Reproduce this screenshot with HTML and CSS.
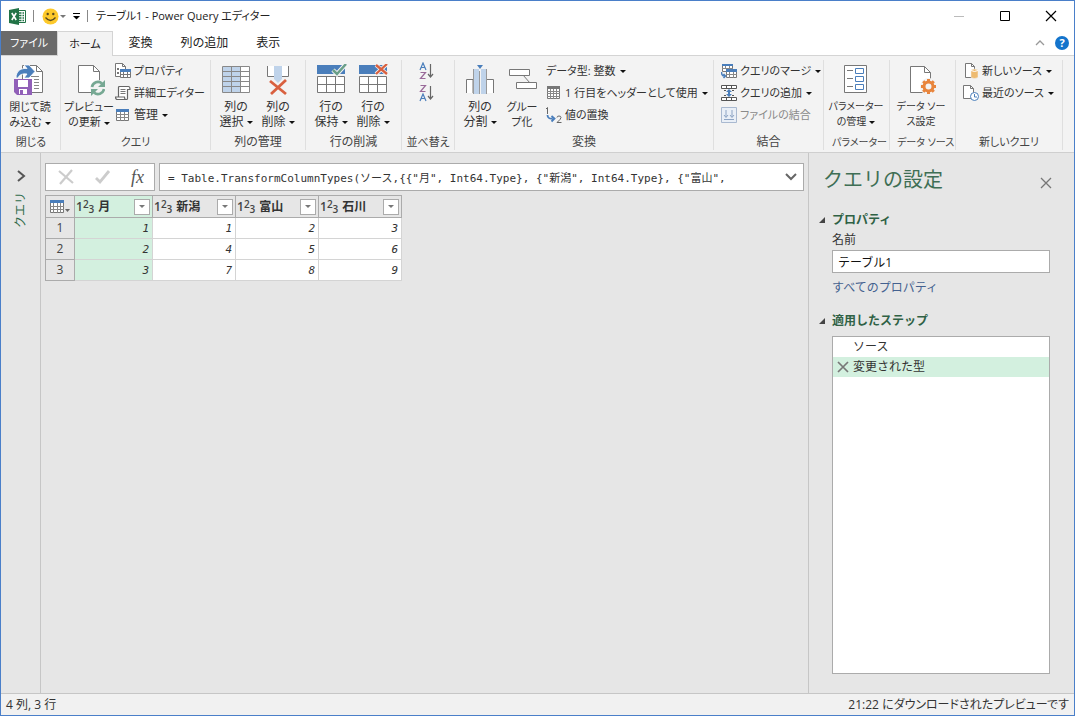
FILE: index.html
```html
<!DOCTYPE html>
<html lang="ja">
<head>
<meta charset="utf-8">
<title>テーブル1 - Power Query エディター</title>
<link rel="stylesheet" href="styles.css">
</head>
<body>
<div class="window">
  <header class="titlebar">
    <svg class="app-icon" width="17" height="17" viewBox="0 0 17 17"><path d="M8.500 2.500h8v12h-8z" fill="#fff" stroke="#217346"/><path d="M10 5h2.500M13.500 5H15M10 7.500h2.500M13.500 7.500H15M10 10h2.500M13.500 10H15M10 12.500h2.500M13.500 12.500H15" stroke="#217346" stroke-width="1.300"/><path d="M0 2l10-2v17L0 15z" fill="#217346"/><path d="M2.800 5l4.400 7M7.200 5l-4.400 7" stroke="#fff" stroke-width="1.600"/></svg>
    <span class="bar"></span>
    <button class="quick" aria-label="フィードバック"><svg width="17" height="17" viewBox="0 0 17 17"><circle cx="8.500" cy="8.500" r="8" fill="#fdc92b"/><circle cx="5.700" cy="6" r="1.200" fill="#5a4a20"/><circle cx="11.300" cy="6" r="1.200" fill="#5a4a20"/><path d="M3.500 9.500q5 6 10 0" fill="none" stroke="#5a4a20" stroke-width="1.300"/></svg><span class="caret caret-gray"></span></button>
    <button class="quick customize" aria-label="クイック アクセスのカスタマイズ"><svg width="7" height="7" viewBox="0 0 7 7"><path d="M0 .5h7" stroke="#000"/><path d="M0 3h7L3.500 6.500z"/></svg></button>
    <span class="bar"></span>
    <h1 class="title">テーブル1 - Power Query エディター</h1>
    <div class="controls">
      <button aria-label="最小化"><svg width="12" height="12"><path d="M1 6.500h10" stroke="#bbb"/></svg></button>
      <button aria-label="最大化"><svg width="12" height="12"><path d="M1.500 1.500h9v9h-9z" fill="none" stroke="#000"/></svg></button>
      <button aria-label="閉じる"><svg width="12" height="12"><path d="M1 1l10 10M11 1L1 11" stroke="#000" stroke-width="1.200"/></svg></button>
    </div>
  </header>

  <nav class="tabs">
    <button class="tab file">ファイル</button>
    <button class="tab active">ホーム</button>
    <button class="tab">変換</button>
    <button class="tab">列の追加</button>
    <button class="tab">表示</button>
    <div class="tab-tools">
      <button aria-label="リボンを折りたたむ"><svg width="10" height="6"><path d="M1 5l4-4 4 4" fill="none" stroke="#999" stroke-width="1.300"/></svg></button>
      <button class="help" aria-label="ヘルプ">?</button>
    </div>
  </nav>

  <section class="ribbon" aria-label="ホーム">
    <div class="group g-close">
      <div class="tools">
        <button class="big wide snug"><svg width="32" height="32" viewBox="0 0 32 32"><path d="M8.500 1.500h14l6 6v21h-20z" fill="#fff" stroke="#777"/><path d="M22.500 1.500v6h6" fill="none" stroke="#777"/><path d="M17 12.500h8M20 15.500h5M20 18.500h5M20 21.500h5M20 24.500h5" stroke="#888"/><path d="M2 14C2 6 8 4 13 4.500L10 1h5l6 6.500-6 6.500h-5l3-4Q6 9 4 14z" fill="#4a7ebb" stroke="#fff" stroke-width=".8"/><path d="M0 15h18v16H3l-3-3z" fill="#9160b8"/><path d="M4 16h10v7H4zM5 25h8v5H5z" fill="#fff"/><path d="M6 26h3v4H6z" fill="#9160b8"/></svg><span>閉じて読<br>み込む<i class="caret"></i></span></button>
      </div>
      <p class="caption snug">閉じる</p>
    </div>
    <div class="group g-query">
      <div class="tools">
        <button class="big wide snug"><svg width="32" height="32" viewBox="0 0 32 32"><path d="M5.500 1.500h15l6 6v21h-21z" fill="#fff" stroke="#777"/><path d="M20.500 1.500v6h6" fill="none" stroke="#777"/><circle cx="25" cy="24" r="8" fill="#f3f3f3"/><path d="M19 23a6 6 0 0 1 10-3.500M31 25a6 6 0 0 1-10 3.500" fill="none" stroke="#76a893" stroke-width="2.600"/><path d="M32 16v7h-7zM18 32v-7h7z" fill="#76a893"/></svg><span>プレビュー<br>の更新<i class="caret"></i></span></button>
        <div class="stack">
          <button class="small snug"><svg width="16" height="16" viewBox="0 0 16 16"><path d="M.5.5h7l3 3v10H.5z" fill="#fff" stroke="#777"/><path d="M7.500.5v3h3" fill="none" stroke="#777"/><path d="M2 5h2v2H2zM2 9h2v2H2z" fill="#777"/><path d="M5.500 6.500h10v8h-10z" fill="#fff" stroke="#777"/><path d="M5 6h11v3H5z" fill="#4a7ebb"/><path d="M5.500 11.500h10M8.500 9v6M12.500 9v6" stroke="#777"/></svg>プロパティ</button>
          <button class="small snug"><svg width="16" height="16" viewBox="0 0 16 16"><path d="M3.500 12V2.500q0-1 1-1h9q1.500 0 1.500 3h-2.500v9q0 1-1 1h-9Q.5 14.500.5 12h9q0 2.500 1.500 2.500" fill="#fff" stroke="#666" stroke-width="1.200"/><path d="M5.500 4.500h5M5.500 6.500h5M5.500 8.500h5" stroke="#777"/></svg>詳細エディター</button>
          <button class="small"><svg width="16" height="16" viewBox="0 0 16 16"><path d="M1.500 2.500h12v11h-12z" fill="#fff" stroke="#777"/><path d="M1 2h13v3H1z" fill="#4a7ebb"/><path d="M1 7.500h13M1 10.500h13M5.500 5v9M9.500 5v9" stroke="#888"/></svg>管理<i class="caret"></i></button>
        </div>
      </div>
      <p class="caption snug">クエリ</p>
    </div>
    <div class="group g-cols">
      <div class="tools">
        <button class="big"><svg width="32" height="32" viewBox="0 0 32 32"><path d="M2.500 2.500h27v26h-27z" fill="#fff"/><path d="M3 3h18v25H3z" fill="#bfd3ea"/><path d="M2.500 2.500h27v26h-27zM2.500 7.500h27M2.500 12.500h27M2.500 17.500h27M2.500 22.500h27M11.500 2.500v26M20.500 2.500v26" fill="none" stroke="#888"/></svg><span>列の<br>選択<i class="caret"></i></span></button>
        <button class="big"><svg width="32" height="32" viewBox="0 0 32 32"><path d="M5 2h7v10H5zM20 2h7v10h-7z" fill="#fff"/><path d="M5.500 2v10.500H12M26.500 2v10.500H20" fill="none" stroke="#777"/><path d="M12 2h8v13l-4 4-4-4z" fill="#bfd3ea"/><path d="M8 17l16 13M24 16L9 30" stroke="#d9603f" stroke-width="2.800"/></svg><span>列の<br>削除<i class="caret"></i></span></button>
      </div>
      <p class="caption">列の管理</p>
    </div>
    <div class="group g-rows">
      <div class="tools">
        <button class="big"><svg width="32" height="32" viewBox="0 0 32 32"><path d="M2 1h28v9H2z" fill="#4a7ebb"/><path d="M2.500 12.500h27v16h-27zM2.500 20.500h27M11.500 12.500v16M20.500 12.500v16" fill="#fff" stroke="#777"/><path d="M18 6l4 4 9-10" fill="none" stroke="#f3f3f3" stroke-width="4.500"/><path d="M18 6l4 4 9-10" fill="none" stroke="#6a9f89" stroke-width="2.500"/></svg><span>行の<br>保持<i class="caret"></i></span></button>
        <button class="big"><svg width="32" height="32" viewBox="0 0 32 32"><path d="M2 1h28v9H2z" fill="#4a7ebb"/><path d="M2.500 12.500h27v16h-27zM2.500 20.500h27M11.500 12.500v16M20.500 12.500v16" fill="#fff" stroke="#777"/><path d="M19 1l11 9M30 0L19 10" stroke="#f3f3f3" stroke-width="4"/><path d="M19 1l11 9M30 0L19 10" stroke="#d9603f" stroke-width="2.300"/></svg><span>行の<br>削除<i class="caret"></i></span></button>
      </div>
      <p class="caption">行の削減</p>
    </div>
    <div class="group g-sort">
      <div class="tools">
        <div class="stack">
          <button class="small" aria-label="昇順で並べ替え"><svg width="16" height="18" viewBox="0 0 16 18"><path d="M1 8l3-7 3 7M2 5.500h4" fill="none" stroke="#4a7ebb" stroke-width="1.200"/><path d="M1.500 10.500h5l-5 6h5" fill="none" stroke="#9a6a9a" stroke-width="1.200"/><path d="M11.500 2v13M9 12l2.500 3 2.500-3" fill="none" stroke="#666" stroke-width="1.200"/></svg></button>
          <button class="small" aria-label="降順で並べ替え"><svg width="16" height="18" viewBox="0 0 16 18"><path d="M1.500 1.500h5l-5 6h5" fill="none" stroke="#9a6a9a" stroke-width="1.200"/><path d="M1 17l3-7 3 7M2 14.500h4" fill="none" stroke="#4a7ebb" stroke-width="1.200"/><path d="M11.500 2v13M9 12l2.500 3 2.500-3" fill="none" stroke="#666" stroke-width="1.200"/></svg></button>
        </div>
      </div>
      <p class="caption snug">並べ替え</p>
    </div>
    <div class="group g-transform">
      <div class="tools">
        <button class="big"><svg width="32" height="32" viewBox="0 0 32 32"><path d="M2.500 29V15.500H9V29M22 29V15.500h7.500V29" fill="#fff" stroke="#777"/><path d="M10 5h5v25h-5zM17 5h5v25h-5z" fill="#bfd3ea"/><path d="M9.500 30V5M15.500 7v23M22.500 5v25" stroke="#999"/><path d="M13 1h6l-3 4z" fill="#4a7ebb"/></svg><span>列の<br>分割<i class="caret"></i></span></button>
        <button class="big snug"><svg width="32" height="32" viewBox="0 0 32 32"><path d="M17 11l7 8" stroke="#777"/><path d="M3.500 5.500h20v6h-20zM10.500 18.500h20v6h-20z" fill="#fff" stroke="#777"/></svg><span>グルー<br>プ化</span></button>
        <div class="stack">
          <button class="small snug">データ型: 整数<i class="caret"></i></button>
          <button class="small snug"><svg width="16" height="16" viewBox="0 0 16 16"><path d="M1.500 1.500h12v12h-12z" fill="#fff" stroke="#777"/><path d="M1 1h13v3H1z" fill="#777"/><path d="M1 6.500h13M1 8.500h13M1 11.500h13M4.500 4v10M7.500 4v10M10.500 4v10" stroke="#888"/></svg>1 行目をヘッダーとして使用<i class="caret"></i></button>
          <button class="small snug"><svg width="16" height="16" viewBox="0 0 16 16"><path d="M0 2l1.500-1.500V7" fill="none" stroke="#666"/><path d="M1.500 8q0 4 5 3.500M5.500 9l3 2.500-3 3" fill="none" stroke="#4a7ebb" stroke-width="1.800"/><path d="M11 10.500q0-1.500 2-1.500 2 0 2 1.500t-4 5h4.500" fill="none" stroke="#666"/></svg>値の置換</button>
        </div>
      </div>
      <p class="caption">変換</p>
    </div>
    <div class="group g-combine">
      <div class="tools">
        <div class="stack">
          <button class="small snug"><svg width="16" height="16" viewBox="0 0 16 16"><path d="M1.500 1.500h10v7h-10zM5.500 7.500h10v7h-10z" fill="#fff" stroke="#777"/><path d="M1 1h11v2H1zM5 6h11v3H5z" fill="#4a7ebb"/><path d="M1 5.500h11M4.500 3v3M8.500 3v3M5 11.500h11M8.500 9v6M12.500 9v6" stroke="#888"/><path d="M.5 9q0 4 3 4M2.500 11l2 2-2 2" fill="none" stroke="#4a7ebb" stroke-width="1.500"/></svg>クエリのマージ<i class="caret"></i></button>
          <button class="small snug"><svg width="16" height="16" viewBox="0 0 16 16"><path d="M.5.500h15v3H.5zM.5 12.500h15v3H.5z" fill="#fff" stroke="#555"/><path d="M5.500.5v3M10.500.5v3M5.500 12.500v3M10.500 12.500v3M3 5.500h2M11 5.500h2M3 10.500h2M11 10.500h2" stroke="#555"/><path d="M8 4l3 3H9v2h2l-3 3-3-3h2V7H5z" fill="#4a7ebb"/></svg>クエリの追加<i class="caret"></i></button>
          <button class="small snug" disabled><svg width="16" height="16" viewBox="0 0 16 16"><path d="M.5.500h15v15H.5z" fill="#e9eff7" stroke="#a9b9d0"/><path d="M5 3v7M3 8l2 2.500L7 8M11 3v7M9 8l2 2.500L13 8M3 12.500h10" fill="none" stroke="#8da4c4"/></svg>ファイルの結合</button>
        </div>
      </div>
      <p class="caption">結合</p>
    </div>
    <div class="group g-params">
      <div class="tools">
        <button class="big wide tight"><svg width="32" height="32" viewBox="0 0 32 32"><path d="M4.500 1.500h22v27h-22z" fill="#fff" stroke="#777"/><path d="M7 6.500h6M7 14.500h6M7 22.500h6" stroke="#777"/><path d="M15.500 4.500h8v5h-8zM15.500 12.500h8v5h-8zM15.500 20.500h8v5h-8z" fill="#fff" stroke="#4a7ebb"/></svg><span>パラメーター<br>の管理<i class="caret"></i></span></button>
      </div>
      <p class="caption tight">パラメーター</p>
    </div>
    <div class="group g-source">
      <div class="tools">
        <button class="big wide tight"><svg width="32" height="32" viewBox="0 0 32 32"><path d="M5.500 2.500h14l6 6v20h-20z" fill="#fff" stroke="#777"/><path d="M19.500 2.500v6h6" fill="none" stroke="#777"/><circle cx="23.500" cy="22.500" r="8.500" fill="#f3f3f3"/><circle cx="23.500" cy="22.500" r="4.500" fill="#f3f3f3" stroke="#e8853d" stroke-width="3"/><path d="M23.500 15v3M23.500 27v3M16 22.500h3M28 22.500h3M18.200 17.200l2 2M26.800 25.800l2 2M18.200 27.800l2-2M26.800 19.200l2-2" stroke="#e8853d" stroke-width="3"/></svg><span>データ ソー<br>ス設定</span></button>
      </div>
      <p class="caption tight">データ ソース</p>
    </div>
    <div class="group g-new">
      <div class="tools">
        <div class="stack">
          <button class="small snug"><svg width="16" height="16" viewBox="0 0 16 16"><path d="M2.500.5h6l3 3v11h-9z" fill="#fff" stroke="#777"/><path d="M8.500.5v3h3" fill="none" stroke="#777"/><path d="M8 7q3.500-2 7 0v7.500q-3.500 2-7 0z" fill="#eebb70" stroke="#f3f3f3" stroke-width=".5"/><path d="M8 7.500q3.500 2 7 0" fill="none" stroke="#fff"/></svg>新しいソース<i class="caret"></i></button>
          <button class="small snug"><svg width="16" height="16" viewBox="0 0 16 16"><path d="M.5.500h7l3 3v10H.5z" fill="#fff" stroke="#777"/><path d="M7.500.5v3h3" fill="none" stroke="#777"/><circle cx="11.500" cy="11.500" r="4" fill="#fff" stroke="#4a7ebb"/><path d="M11.500 9v3H14" fill="none" stroke="#4a7ebb"/></svg>最近のソース<i class="caret"></i></button>
        </div>
      </div>
      <p class="caption snug">新しいクエリ</p>
    </div>
  </section>

  <div class="body">
    <aside class="queries">
      <button aria-label="クエリを展開"><svg width="10" height="12"><path d="M2 1l6 5-6 5" fill="none" stroke="#555" stroke-width="2"/></svg></button>
      <span class="queries-label">クエリ</span>
    </aside>

    <main class="work">
      <div class="formula">
        <div class="formula-actions">
          <button aria-label="キャンセル" disabled><svg width="16" height="16"><path d="M1 2l14 12M14 1L2 15" stroke="#ccc" stroke-width="2.200"/></svg></button>
          <button aria-label="適用" disabled><svg width="16" height="16"><path d="M1 9l4 4L14 2" fill="none" stroke="#ccc" stroke-width="2.800"/></svg></button>
          <button class="fx" aria-label="ステップの追加">fx</button>
        </div>
        <div class="formula-box">
          <input type="text" aria-label="数式" value='= Table.TransformColumnTypes(ソース,{{"月", Int64.Type}, {"新潟", Int64.Type}, {"富山",'>
          <button aria-label="数式バーを展開"><svg width="12" height="8"><path d="M1 1l5 5 5-5" fill="none" stroke="#666" stroke-width="2"/></svg></button>
        </div>
      </div>

      <table class="grid">
        <thead>
          <tr>
            <th class="corner"><button aria-label="テーブル メニュー"><svg width="21" height="14" viewBox="0 0 21 14"><path d="M.5.500h13v12H.5z" fill="#fff" stroke="#777"/><path d="M0 0h14v3H0z" fill="#4a7ebb"/><path d="M0 6.500h14M0 9.500h14M3.500 3v10M7.500 3v10M10.500 3v10" stroke="#888"/><path d="M15 9h5l-2.500 3z" fill="#666"/></svg></button></th>
            <th class="selected first"><div class="head"><span class="type">1<sup>2</sup><sub>3</sub></span><span class="name">月</span><button class="filter" aria-label="月のフィルター"><i class="caret caret-gray"></i></button></div></th>
            <th><div class="head"><span class="type">1<sup>2</sup><sub>3</sub></span><span class="name">新潟</span><button class="filter" aria-label="新潟のフィルター"><i class="caret caret-gray"></i></button></div></th>
            <th><div class="head"><span class="type">1<sup>2</sup><sub>3</sub></span><span class="name">富山</span><button class="filter" aria-label="富山のフィルター"><i class="caret caret-gray"></i></button></div></th>
            <th><div class="head"><span class="type">1<sup>2</sup><sub>3</sub></span><span class="name">石川</span><button class="filter" aria-label="石川のフィルター"><i class="caret caret-gray"></i></button></div></th>
          </tr>
        </thead>
        <tbody>
          <tr><th>1</th><td class="selected">1</td><td>1</td><td>2</td><td>3</td></tr>
          <tr><th>2</th><td class="selected">2</td><td>4</td><td>5</td><td>6</td></tr>
          <tr><th>3</th><td class="selected">3</td><td>7</td><td>8</td><td>9</td></tr>
        </tbody>
      </table>
    </main>

    <aside class="settings">
      <div class="settings-head">
        <h2>クエリの設定</h2>
        <button aria-label="閉じる"><svg width="12" height="12"><path d="M1 1l10 10M11 1L1 11" stroke="#777" stroke-width="1.300"/></svg></button>
      </div>
      <h3><svg width="6" height="6"><path d="M6 0v6H0z" fill="#444"/></svg>プロパティ</h3>
      <label for="query-name">名前</label>
      <input id="query-name" type="text" value="テーブル1">
      <a href="#">すべてのプロパティ</a>
      <h3><svg width="6" height="6"><path d="M6 0v6H0z" fill="#444"/></svg>適用したステップ</h3>
      <ul class="steps">
        <li><button class="step">ソース</button></li>
        <li class="current"><button class="remove" aria-label="ステップの削除"><svg width="12" height="12"><path d="M1 1l10 10M11 1L1 11" stroke="#777" stroke-width="1.700"/></svg></button><button class="step">変更された型</button></li>
      </ul>
    </aside>
  </div>

  <footer class="status"><span>4 列, 3 行</span><span>21:22 にダウンロードされたプレビューです</span></footer>
</div>
</body>
</html>
```
FILE: styles.css
```css
* { box-sizing: border-box; }

body {
  margin: 0;
  font-family: "Open Sans", "Noto Sans CJK JP", sans-serif;
  font-size: 12px;
  line-height: 16px;
  font-feature-settings: "palt";
  color: #333;
}

button, input { font: inherit; font-feature-settings: inherit; color: inherit; }
button { padding: 0; border: 0; background: none; white-space: nowrap; }
h1, h2, h3, p, ul { margin: 0; padding: 0; font-weight: normal; }
svg { display: block; flex: none; }

.window {
  display: flex;
  flex-direction: column;
  min-height: 100vh;
  border: 1px solid #4a7fc9;
  background: #fff;
}

.caret {
  display: inline-block;
  flex: none;
  margin-left: 4px;
  vertical-align: middle;
  border: 3px solid transparent;
  border-top-color: #111;
  border-bottom: 0;
}
.caret-gray { border-top-color: #777; }

/* Title bar */
.titlebar { display: flex; align-items: center; height: 30px; padding-left: 8px; }
.bar { width: 1px; height: 12px; margin: 0 8px 0 7px; background: #888; }
.quick { display: flex; align-items: center; }
.quick .caret { margin-left: 1px; }
.customize { margin-left: 7px; }
.title { font-size: 11px; color: #222; }
.controls { display: flex; gap: 34px; margin-left: auto; padding-right: 17px; }

/* Tabs */
.tabs { display: flex; height: 24px; }
.tab { padding: 0 14px; color: #222; }
.file { padding: 0 9px; background: #6a6a6a; color: #fff; font-size: 11px; }
.active {
  height: 25px;
  padding: 0 11px;
  margin-right: 2px;
  border: 1px solid #d4d4d4;
  border-bottom: 0;
  background: #f3f3f3;
  font-size: 11px;
  z-index: 1;
}
.tab-tools { display: flex; align-items: center; gap: 10px; margin-left: auto; padding-right: 5px; }
.help { width: 14px; height: 14px; border-radius: 50%; background: #1474cc; color: #fff; font-weight: 700; font-size: 11px; line-height: 14px; }

/* Ribbon */
.ribbon {
  display: flex;
  height: 98px;
  padding: 4px 0 2px;
  border-top: 1px solid #d4d4d4;
  border-bottom: 1px solid #cfcfcf;
  background: #f3f3f3;
}
.group { display: flex; flex: none; flex-direction: column; padding-left: 4px; border-right: 1px solid #dfdfdf; }
.tools { display: flex; flex: 1; }
.caption { padding-right: 4px; text-align: center; white-space: nowrap; color: #444; }
.big { display: flex; flex: none; flex-direction: column; align-items: center; width: 42px; padding-top: 4px; line-height: 15px; }
.big span { display: block; padding-top: 3px; }
.big .caret { margin-left: 3px; }
.wide { width: 48px; }
.stack { display: flex; flex-direction: column; align-items: flex-start; padding-left: 3px; }
.small { display: flex; align-items: center; gap: 3px; height: 22px; }
.small .caret { margin-left: 1px; }
.small:disabled { color: #8a8a8a; }
.snug { font-size: 11px; }
.tight { font-size: 10px; }

.g-close { width: 60px; padding-left: 5px; }
.g-query { width: 150px; }
.g-query .stack { padding-left: 2px; }
.g-cols { width: 95px; }
.g-rows { width: 96px; }
.g-sort { width: 53px; }
.g-sort .stack { padding-left: 13px; }
.g-transform { width: 259px; }
.g-combine { width: 110px; }
.g-params { width: 66px; padding-left: 8px; }
.g-source { width: 66px; padding-left: 7px; }
.g-params .caption, .g-source .caption { padding-right: 8px; }
.g-new { width: 107px; }

/* Body */
.body { display: flex; flex: 1; background: #e6e6e6; }

.queries {
  display: flex;
  flex-direction: column;
  align-items: center;
  gap: 10px;
  width: 40px;
  padding-top: 17px;
  border-right: 1px solid #c6c6c6;
}
.queries-label {
  writing-mode: vertical-rl;
  text-orientation: sideways;
  transform: rotate(180deg);
  font-feature-settings: normal;
  color: #2f6b4b;
}

.work { flex: 1; min-width: 0; padding: 10px 4px; }

.formula { display: flex; gap: 4px; height: 28px; margin-bottom: 4px; }
.formula-actions, .formula-box { display: flex; align-items: center; border: 1px solid #ababab; background: #fff; }
.formula-actions { justify-content: space-between; width: 110px; padding: 0 10px 0 12px; }
.fx { font: italic 18px "Liberation Serif", serif; color: #555; }
.formula-box { flex: 1; padding: 0 6px 0 8px; }
.formula-box input {
  flex: 1;
  min-width: 0;
  padding: 0;
  border: 0;
  outline: 0;
  font: 11px "DejaVu Sans Mono", "Noto Sans CJK JP", monospace;
  font-feature-settings: normal;
  color: #333;
}

.grid { border-collapse: collapse; table-layout: fixed; width: 357px; }
.grid th, .grid td { height: 21px; padding: 0; }
.grid thead th { height: 22px; border: 1px solid #ababab; background: #e6e6e6; }
.grid thead .selected, .grid .selected { background: #d3f0df; }
.grid .corner { width: 29px; }
.grid .first { width: 78px; }
.corner button { display: block; margin: 0 auto; }
.grid tbody th { border: 1px solid #ababab; font-weight: normal; text-align: center; color: #444; }
.grid td {
  padding-right: 3px;
  border: 1px solid #d4d4d4;
  background: #fff;
  text-align: right;
  font: italic 11px "DejaVu Sans Mono", monospace;
}
.head { display: flex; align-items: center; padding: 0 2px 0 1px; }
.type { display: flex; align-items: center; font-weight: 600; line-height: 16px; color: #444; }
.type sup { font-size: 10px; line-height: 10px; padding-bottom: 5px; }
.type sub { font-size: 10px; line-height: 10px; padding-top: 5px; }
.name { margin-left: 4px; font-weight: 700; }
.filter { display: grid; place-items: center; width: 16px; height: 16px; margin-left: auto; border: 1px solid #ababab; background: #fff; }
.filter .caret { margin: 0; }

/* Settings pane */
.settings {
  display: flex;
  flex-direction: column;
  width: 266px;
  padding: 12px 24px 19px 23px;
  border-left: 1px solid #c6c6c6;
  font-feature-settings: normal;
}
.settings-head { display: flex; align-items: center; justify-content: space-between; margin-left: -9px; }
.settings h2 { font-size: 20px; line-height: 30px; color: #3f6f55; }
.settings-head button { padding: 6px 0 0; margin-right: -2px; }
.settings h3 { display: flex; align-items: center; gap: 7px; margin: 17px 0 4px -13px; font-size: 12px; font-weight: 700; color: #2f6145; }
.settings label { margin-bottom: 2px; }
.settings input { height: 23px; padding: 0 5px; border: 1px solid #ababab; background: #fff; color: #111; }
.settings a { margin-top: 7px; color: #44618f; text-decoration: none; }
.steps { flex: 1; margin-top: 3px; border: 1px solid #ababab; background: #fff; list-style: none; }
.steps li { display: flex; align-items: center; height: 20px; padding-left: 20px; }
.steps .current { padding-left: 4px; gap: 4px; background: #d3f0df; }
.step { flex: 1; text-align: left; }

/* Status bar */
.status {
  display: flex;
  justify-content: space-between;
  padding: 3px 5px 2px;
  border-top: 1px solid #c6c6c6;
  background: #f1f1f1;
}
```
